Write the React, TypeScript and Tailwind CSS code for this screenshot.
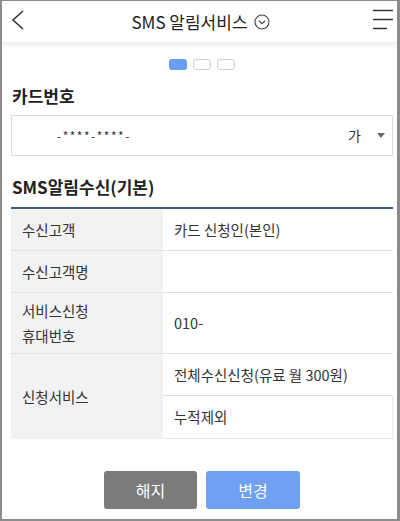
import React from "react";

const font = { fontFamily: '"Noto Sans CJK KR", "Noto Sans", sans-serif' };

export default function App() {
  return (
    <div
      className="w-[400px] h-[521px] box-border border-l-2 border-r-[3px] border-t border-b-2 border-[#8c8c8c] bg-white overflow-hidden text-[#333]"
      style={font}
    >
      {/* Header */}
      <div className="relative h-[42px] flex items-center justify-center bg-white shadow-[0_3px_5px_rgba(0,0,0,0.07)] border-b border-[#ececec]">
        <div className="absolute left-[8px] top-[8px]">
          <svg width="16" height="22" viewBox="0 0 16 22">
            <polyline points="13,2 3,11 13,20" fill="none" stroke="#333" strokeWidth="1.6" />
          </svg>
        </div>
        <div className="flex items-center gap-[6px] pl-[2px]">
          <span className="text-[17px] font-normal leading-none text-[#222]">SMS 알림서비스</span>
          <svg width="16" height="16" viewBox="0 0 16 16">
            <circle cx="8" cy="8" r="7" fill="none" stroke="#444" strokeWidth="1.1" />
            <polyline points="4.8,6.6 8,9.6 11.2,6.6" fill="none" stroke="#444" strokeWidth="1.2" />
          </svg>
        </div>
        <div className="absolute right-[3px] top-[7px]">
          <svg width="22" height="24" viewBox="0 0 22 24">
            <line x1="1" y1="2.5" x2="21" y2="2.5" stroke="#333" strokeWidth="1.5" />
            <line x1="1" y1="11.5" x2="21" y2="11.5" stroke="#333" strokeWidth="1.5" />
            <line x1="1" y1="20.5" x2="15" y2="20.5" stroke="#333" strokeWidth="1.5" />
          </svg>
        </div>
      </div>

      {/* Content */}
      <div className="pl-[9px] pr-[4px]">
        {/* Dots */}
        <div className="flex justify-center gap-[6px] pt-[16px]">
          <div className="w-[18px] h-[11px] rounded-[3px] bg-[#6b9ef0]" />
          <div className="w-[18px] h-[11px] rounded-[3px] border border-[#cfcfcf] bg-white" />
          <div className="w-[18px] h-[11px] rounded-[3px] border border-[#cfcfcf] bg-white" />
        </div>

        <div className="mt-[15px] pl-[1px] text-[17px] font-bold leading-[22px] text-[#222]">카드번호</div>

        {/* Select box */}
        <div className="mt-[8px] h-[41px] border border-[#dcdcdc] flex items-center">
          <span className="ml-[45px] text-[12px] tracking-[1.5px] text-[#333]">-****-****-</span>
          <span className="ml-auto text-[14px] text-[#333]">가</span>
          <svg className="ml-[16px] mr-[7px]" width="8" height="5" viewBox="0 0 8 5">
            <polygon points="0,0 8,0 4,5" fill="#666" />
          </svg>
        </div>

        <div className="mt-[20px] pl-[1px] text-[17px] font-bold leading-[22px] text-[#222]">SMS알림수신(기본)</div>

        {/* Table */}
        <div className="mt-[9px] border-t-2 border-[#3f5d7c] text-[14.5px]">
          <div className="flex h-[42px] border-b border-[#e2e2e2]">
            <div className="w-[152px] bg-[#f2f2f2] flex items-center pl-[11px]">수신고객</div>
            <div className="flex-1 flex items-center pl-[11px]">카드 신청인(본인)</div>
          </div>
          <div className="flex h-[42px] border-b border-[#e2e2e2]">
            <div className="w-[152px] bg-[#f2f2f2] flex items-center pl-[11px]">수신고객명</div>
            <div className="flex-1" />
          </div>
          <div className="flex h-[61px] border-b border-[#e2e2e2]">
            <div className="w-[152px] bg-[#f2f2f2] flex items-center pl-[11px] leading-[25px]">
              서비스신청
              <br />
              휴대번호
            </div>
            <div className="flex-1 flex items-center pl-[11px]">010-</div>
          </div>
          <div className="flex h-[85px]">
            <div className="w-[152px] bg-[#f2f2f2] flex items-center pl-[11px]">신청서비스</div>
            <div className="flex-1 flex flex-col">
              <div className="h-[42px] flex items-center pl-[11px] border-b border-[#e2e2e2]">전체수신신청(유료 월 300원)</div>
              <div className="flex-1 flex items-center pl-[11px] border-r border-[#e8e8e8] border-b">누적제외</div>
            </div>
          </div>
        </div>
      </div>

      {/* Buttons */}
      <div className="flex justify-center gap-[9px] mt-[32px] pl-[5px]">
        <button className="w-[93px] h-[38px] rounded-[3px] bg-[#7b7b7b] text-white text-[16px]">해지</button>
        <button className="w-[94px] h-[38px] rounded-[3px] bg-[#70a0f2] text-white text-[16px]">변경</button>
      </div>
    </div>
  );
}
